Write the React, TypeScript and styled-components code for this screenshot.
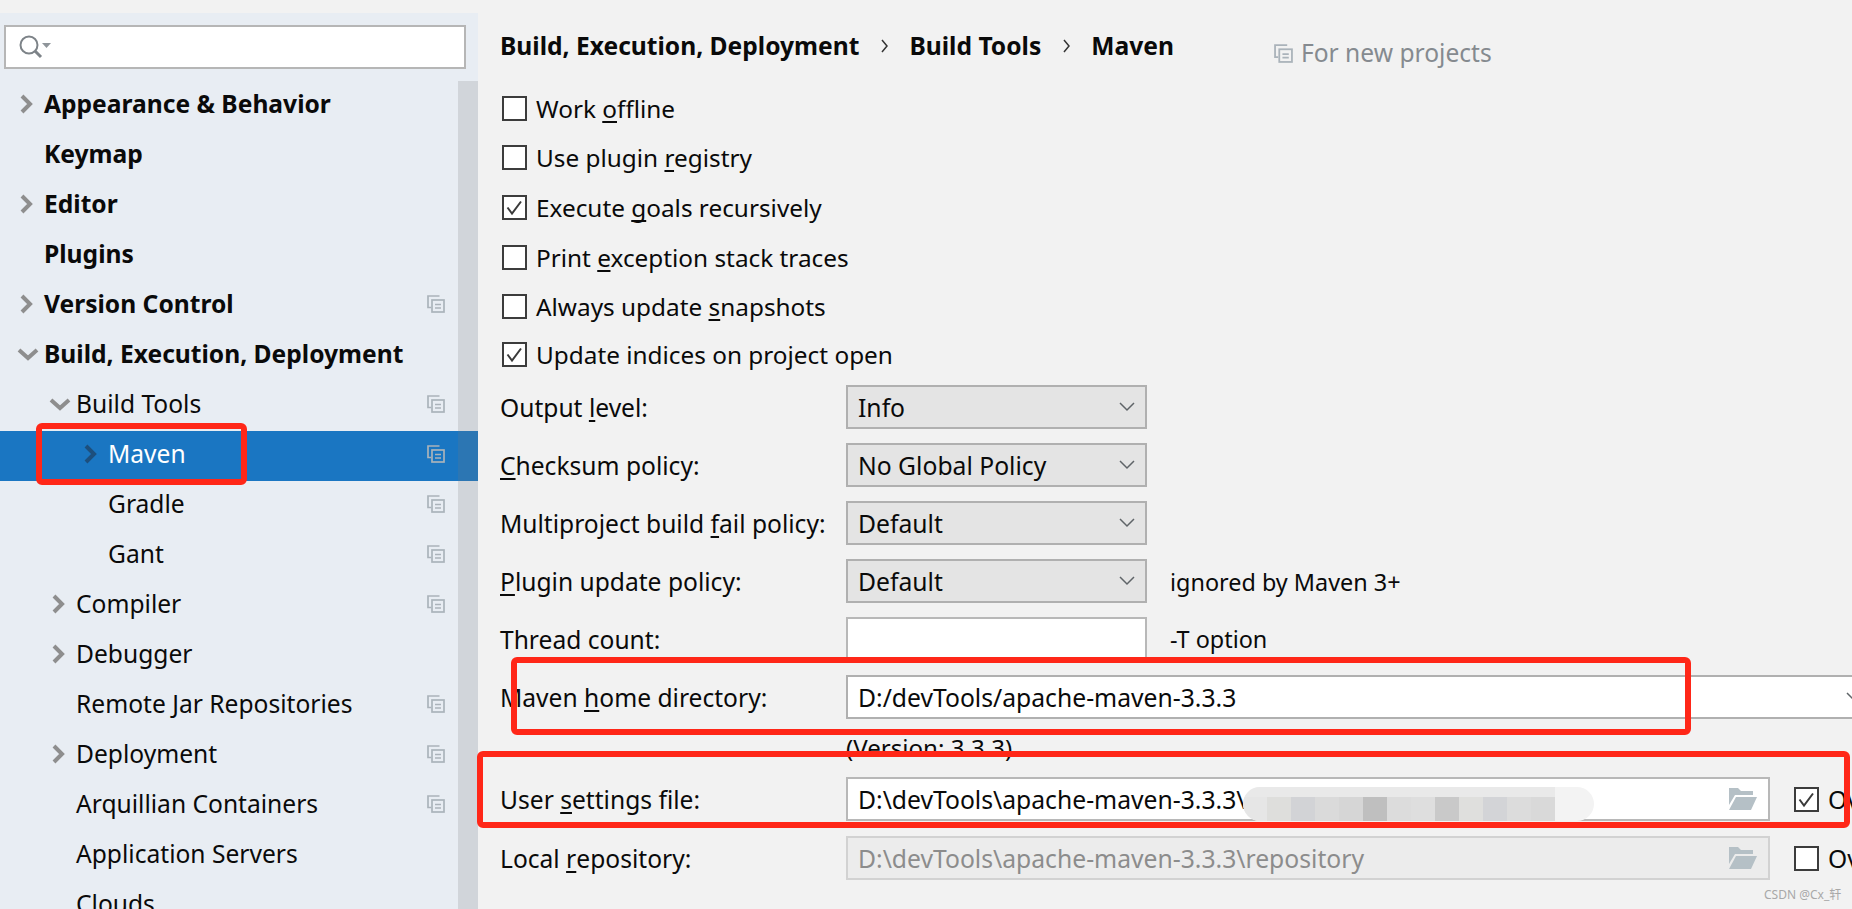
import React from "react";
import styled, { createGlobalStyle } from "styled-components";

const FONT = `"Noto Sans", "Open Sans", "Noto Sans CJK SC", sans-serif`;
const RED = "#ff2718";

const Global = createGlobalStyle`
  html, body { margin: 0; padding: 0; background: #f2f2f2; }
  body { font-family: ${FONT}; color: #0a0a0a; overflow: hidden; }
`;

const Page = styled.div`
  position: relative;
  display: grid;
  grid-template-columns: 478px 1fr;
  width: 1852px;
  height: 909px;
  overflow: hidden;
  font-size: 24.6px;
`;

/* ---------- left tree ---------- */

const Sidebar = styled.aside`
  position: relative;
  display: flex;
  flex-direction: column;
  background: #e8edf3;
  overflow: hidden;
`;

const TitleStrip = styled.div`
  height: 13px;
  flex: none;
  background: #f2f2f2;
`;

const SearchWrap = styled.div`
  flex: none;
  padding: 12px 12px 0 4px;
`;

const SearchBox = styled.div`
  display: flex;
  align-items: center;
  box-sizing: border-box;
  height: 44px;
  padding-left: 11px;
  background: #fff;
  border: 2px solid #b6b6b6;
`;

const Tree = styled.div`
  display: flex;
  flex-direction: column;
  padding-top: 12px;
`;

const Row = styled.div<{ $selected?: boolean; $level: number; $bold?: boolean }>`
  display: flex;
  align-items: center;
  flex: none;
  box-sizing: border-box;
  height: 50px;
  padding: 0 33px 5px ${({ $level }) => 44 + $level * 32}px;
  position: relative;
  font-weight: ${({ $bold }) => ($bold ? 700 : 400)};
  color: ${({ $selected }) => ($selected ? "#fff" : "#0a0a0a")};
  background: ${({ $selected }) => ($selected ? "#1a76c2" : "transparent")};
`;

const RowLabel = styled.span`
  flex: 1;
  white-space: nowrap;
`;

const RowIcon = styled.span`
  display: flex;
  margin-top: 1px;
`;

const Arrow = styled.svg<{ $level: number }>`
  position: absolute;
  left: ${({ $level }) => 17 + $level * 32}px;
  top: 12px;
  width: 22px;
  height: 22px;
`;

const ScrollTrack = styled.div`
  position: absolute;
  left: 458px;
  top: 81px;
  bottom: 0;
  width: 20px;
  background: rgba(120, 120, 120, 0.2);
`;

/* ---------- right panel ---------- */

const Panel = styled.main`
  display: flex;
  flex-direction: column;
  padding: 0 0 0 22px;
  background: #f2f2f2;
  min-width: 0;
`;

const Header = styled.header`
  display: flex;
  align-items: flex-start;
  height: 83px;
  padding-top: 28px;
  box-sizing: border-box;
`;

const Crumb = styled.span`
  font-weight: 700;
  line-height: 36px;
  white-space: nowrap;
`;

const CrumbSep = styled.svg`
  width: 10px;
  height: 16px;
  margin: 10px 19px 0 21px;
`;

const NewProjects = styled.div`
  display: flex;
  align-items: center;
  gap: 8px;
  margin: 7px 0 0 100px;
  color: #858a8f;
  line-height: 36px;
  white-space: nowrap;
`;

const Checks = styled.div`
  display: flex;
  flex-direction: column;
`;

const CheckRow = styled.label<{ $height: number }>`
  display: flex;
  align-items: center;
  gap: 9px;
  height: ${({ $height }) => $height}px;
  padding-left: 2px;
  font-size: 24.35px;
  white-space: nowrap;
`;

const Box = styled.span`
  display: flex;
  align-items: center;
  justify-content: center;
  flex: none;
  box-sizing: border-box;
  width: 25px;
  height: 25px;
  border: 2px solid #3c3c3c;
  background: #fff;
`;

const Form = styled.div`
  display: grid;
  grid-template-columns: 346px 1fr;
  margin-top: 8px;
`;

const FieldLabel = styled.div`
  display: flex;
  align-items: center;
  height: 44px;
  white-space: nowrap;
`;

const FieldCell = styled.div<{ $height: number }>`
  display: flex;
  align-items: flex-start;
  height: ${({ $height }) => $height}px;
  min-width: 0;
`;

const Select = styled.div<{ $wide?: boolean }>`
  display: flex;
  align-items: center;
  justify-content: space-between;
  box-sizing: border-box;
  width: ${({ $wide }) => ($wide ? "100%" : "301px")};
  height: 44px;
  padding: 0 ${({ $wide }) => ($wide ? "0" : "9px")} 0 10px;
  background: ${({ $wide }) => ($wide ? "#fff" : "#e4e4e4")};
  border: solid #b0b0b0;
  border-width: ${({ $wide }) => ($wide ? "2px 0" : "2px")};
  border-left-width: 2px;
  font-size: 24.7px;
  white-space: nowrap;
  overflow: hidden;
`;

const TextInput = styled.div<{ $disabled?: boolean }>`
  display: flex;
  align-items: center;
  justify-content: space-between;
  box-sizing: border-box;
  width: 301px;
  height: 44px;
  padding: 0 11px 0 10px;
  background: ${({ $disabled }) => ($disabled ? "#ececec" : "#fff")};
  color: ${({ $disabled }) => ($disabled ? "#8c8c8c" : "#0a0a0a")};
  border: 2px solid ${({ $disabled }) => ($disabled ? "#d2d2d2" : "#b8b8b8")};
  font-size: 24.7px;
  white-space: nowrap;
`;

const PathInput = styled(TextInput)`
  width: 924px;
  flex: none;
`;

const Hint = styled.span<{ $top: number }>`
  margin: ${({ $top }) => $top}px 0 0 23px;
  font-size: 23.4px;
  white-space: nowrap;
`;

const Version = styled.div`
  grid-column: 2;
  height: 58px;
  line-height: 58px;
  font-size: 24.1px;
  white-space: nowrap;
`;

const Override = styled.label`
  display: flex;
  align-items: center;
  gap: 9px;
  height: 44px;
  margin-left: 24px;
  white-space: nowrap;
`;

const Mnemonic = styled.span`
  text-decoration: underline;
  text-decoration-thickness: 2px;
  text-decoration-skip-ink: none;
  text-underline-offset: 3px;
`;

const DropArrow = styled.svg<{ $clipped?: boolean }>`
  flex: none;
  width: 18px;
  height: 12px;
  margin-right: ${({ $clipped }) => ($clipped ? "-11px" : "0")};
`;

/* ---------- things painted over the screenshot ---------- */

const Mark = styled.div`
  position: absolute;
  box-sizing: border-box;
  border: 6px solid ${RED};
  border-radius: 6px;
  pointer-events: none;
`;

const MavenMark = styled(Mark)`
  left: 36px;
  top: 423px;
  width: 211px;
  height: 62px;
`;

const HomeMark = styled(Mark)`
  left: 511px;
  top: 657px;
  width: 1180px;
  height: 78px;
`;

const SettingsMark = styled(Mark)`
  left: 477px;
  top: 751px;
  width: 1373px;
  height: 77px;
`;

const Smear = styled.div`
  position: absolute;
  left: 1243px;
  top: 787px;
  width: 351px;
  height: 34px;
  display: flex;
  overflow: hidden;
  border-radius: 17px;
  background: #f3f3f3;
`;

const SmearBlock = styled.div<{ $shade: string }>`
  flex: 0 0 24px;
  background: linear-gradient(#e9e9e9 0 10px, ${({ $shade }) => $shade} 10px);
`;

const Watermark = styled.div`
  position: absolute;
  left: 1764px;
  top: 885px;
  font-size: 12px;
  color: #a8a8a8;
  white-space: nowrap;
`;

const Search = () => (
  <svg width="34" height="26" viewBox="0 0 34 26">
    <circle cx="12" cy="11" r="8.5" fill="none" stroke="#7d8388" strokeWidth="2" />
    <path d="M18 17l6 6" stroke="#7d8388" strokeWidth="3" />
    <path d="M25 9h9l-4.500 5z" fill="#8f959a" />
  </svg>
);

const ProjectIcon = ({ size = 18 }: { size?: number }) => (
  <svg width={size} height={size} viewBox="0 0 18 18" fill="none" stroke="#aab3ba" strokeWidth="1.700">
    <path d="M12.500 1H1v11.500h3" />
    <rect x="5" y="5" width="12" height="12" />
    <path d="M8 9.500h6M8 13h6" />
  </svg>
);

const Folder = () => (
  <svg width="29" height="22" viewBox="0 0 29 22" fill="#b5c0c6">
    <path d="M1 0h9l3 3h12v4H7L1 17z" />
    <path d="M8 9h21l-6 13H1z" />
  </svg>
);

const Chevron = ({ clipped }: { clipped?: boolean }) => (
  <DropArrow $clipped={clipped} viewBox="0 0 18 12" fill="none" stroke="#5f6468" strokeWidth="1.500">
    <path d="M2 2l7 7 7-7" />
  </DropArrow>
);

const Check = () => (
  <svg width="19" height="19" viewBox="0 0 19 19" fill="none" stroke="#3a3a3a" strokeWidth="2">
    <path d="M2.500 9.500l4.500 6 9-12" />
  </svg>
);

type Item = { label: string; level: number; bold?: boolean; arrow?: "right" | "down"; icon?: boolean; selected?: boolean };

const items: Item[] = [
  { label: "Appearance & Behavior", level: 0, bold: true, arrow: "right" },
  { label: "Keymap", level: 0, bold: true },
  { label: "Editor", level: 0, bold: true, arrow: "right" },
  { label: "Plugins", level: 0, bold: true },
  { label: "Version Control", level: 0, bold: true, arrow: "right", icon: true },
  { label: "Build, Execution, Deployment", level: 0, bold: true, arrow: "down" },
  { label: "Build Tools", level: 1, arrow: "down", icon: true },
  { label: "Maven", level: 2, arrow: "right", icon: true, selected: true },
  { label: "Gradle", level: 2, icon: true },
  { label: "Gant", level: 2, icon: true },
  { label: "Compiler", level: 1, arrow: "right", icon: true },
  { label: "Debugger", level: 1, arrow: "right" },
  { label: "Remote Jar Repositories", level: 1, icon: true },
  { label: "Deployment", level: 1, arrow: "right", icon: true },
  { label: "Arquillian Containers", level: 1, icon: true },
  { label: "Application Servers", level: 1 },
  { label: "Clouds", level: 1 },
];

const smearShades = ["#e6e6e6", "#dededc", "#d2d3d6", "#dadada", "#d6d6d6", "#bfbfbf", "#dcdcdc", "#dedede", "#c9c9c9", "#dfdfdd", "#d3d4d7", "#dcdcdc", "#d9d9d9"];

const TreeArrow = ({ item }: { item: Item }) => (
  <Arrow $level={item.level} viewBox="0 0 22 22" fill="none" stroke={item.selected ? "#1d4f7d" : "#8e8e8e"} strokeWidth="4">
    {item.arrow === "right" ? <path d="M5 3l8 8-8 8" /> : <path d="M2 7l9 8 9-8" />}
  </Arrow>
);

const checks = [
  { before: "Work ", key: "o", after: "ffline", h: 50 },
  { before: "Use plugin ", key: "r", after: "egistry", h: 48 },
  { before: "Execute ", key: "g", after: "oals recursively", h: 52, on: true },
  { before: "Print ", key: "e", after: "xception stack traces", h: 48 },
  { before: "Always update ", key: "s", after: "napshots", h: 50 },
  { before: "Update indices on project open", key: "", after: "", h: 46, on: true },
];

export default function App() {
  return (
    <Page>
      <Global />
      <Sidebar>
        <TitleStrip />
        <SearchWrap>
          <SearchBox>
            <Search />
          </SearchBox>
        </SearchWrap>
        <Tree>
          {items.map((item) => (
            <Row key={item.label} $level={item.level} $bold={item.bold} $selected={item.selected}>
              {item.arrow && <TreeArrow item={item} />}
              <RowLabel>{item.label}</RowLabel>
              {item.icon && (
                <RowIcon>
                  <ProjectIcon />
                </RowIcon>
              )}
            </Row>
          ))}
        </Tree>
        <ScrollTrack />
      </Sidebar>

      <Panel>
        <Header>
          <Crumb>Build, Execution, Deployment</Crumb>
          <CrumbSep viewBox="0 0 10 16" fill="none" stroke="#333" strokeWidth="1.500">
            <path d="M2 2l5 6-5 6" />
          </CrumbSep>
          <Crumb>Build Tools</Crumb>
          <CrumbSep viewBox="0 0 10 16" fill="none" stroke="#333" strokeWidth="1.500">
            <path d="M2 2l5 6-5 6" />
          </CrumbSep>
          <Crumb>Maven</Crumb>
          <NewProjects>
            <ProjectIcon size={19} />
            For new projects
          </NewProjects>
        </Header>

        <Checks>
          {checks.map((c) => (
            <CheckRow key={c.before} $height={c.h}>
              <Box>{c.on && <Check />}</Box>
              <span>
                {c.before}
                {c.key && <Mnemonic>{c.key}</Mnemonic>}
                {c.after}
              </span>
            </CheckRow>
          ))}
        </Checks>

        <Form>
          <FieldLabel>Output&nbsp;<Mnemonic>l</Mnemonic>evel:</FieldLabel>
          <FieldCell $height={58}>
            <Select>Info<Chevron /></Select>
          </FieldCell>

          <FieldLabel><Mnemonic>C</Mnemonic>hecksum policy:</FieldLabel>
          <FieldCell $height={58}>
            <Select>No Global Policy<Chevron /></Select>
          </FieldCell>

          <FieldLabel>Multiproject build&nbsp;<Mnemonic>f</Mnemonic>ail policy:</FieldLabel>
          <FieldCell $height={58}>
            <Select>Default<Chevron /></Select>
          </FieldCell>

          <FieldLabel><Mnemonic>P</Mnemonic>lugin update policy:</FieldLabel>
          <FieldCell $height={58}>
            <Select>Default<Chevron /></Select>
            <Hint $top={7}>ignored by Maven 3+</Hint>
          </FieldCell>

          <FieldLabel>Thread count:</FieldLabel>
          <FieldCell $height={58}>
            <TextInput />
            <Hint $top={6}>-T option</Hint>
          </FieldCell>

          <FieldLabel>Maven&nbsp;<Mnemonic>h</Mnemonic>ome directory:</FieldLabel>
          <FieldCell $height={44}>
            <Select $wide>D:/devTools/apache-maven-3.3.3<Chevron clipped /></Select>
          </FieldCell>

          <Version>(Version: 3.3.3)</Version>

          <FieldLabel>User&nbsp;<Mnemonic>s</Mnemonic>ettings file:</FieldLabel>
          <FieldCell $height={59}>
            <PathInput>D:\devTools\apache-maven-3.3.3\<Folder /></PathInput>
            <Override><Box><Check /></Box>Override</Override>
          </FieldCell>

          <FieldLabel>Local&nbsp;<Mnemonic>r</Mnemonic>epository:</FieldLabel>
          <FieldCell $height={44}>
            <PathInput $disabled>D:\devTools\apache-maven-3.3.3\repository<Folder /></PathInput>
            <Override><Box />Override</Override>
          </FieldCell>
        </Form>
      </Panel>

      <Smear>
        {smearShades.map((shade, i) => (
          <SmearBlock key={i} $shade={shade} />
        ))}
      </Smear>
      <MavenMark />
      <HomeMark />
      <SettingsMark />
      <Watermark>CSDN @Cx_轩</Watermark>
    </Page>
  );
}
